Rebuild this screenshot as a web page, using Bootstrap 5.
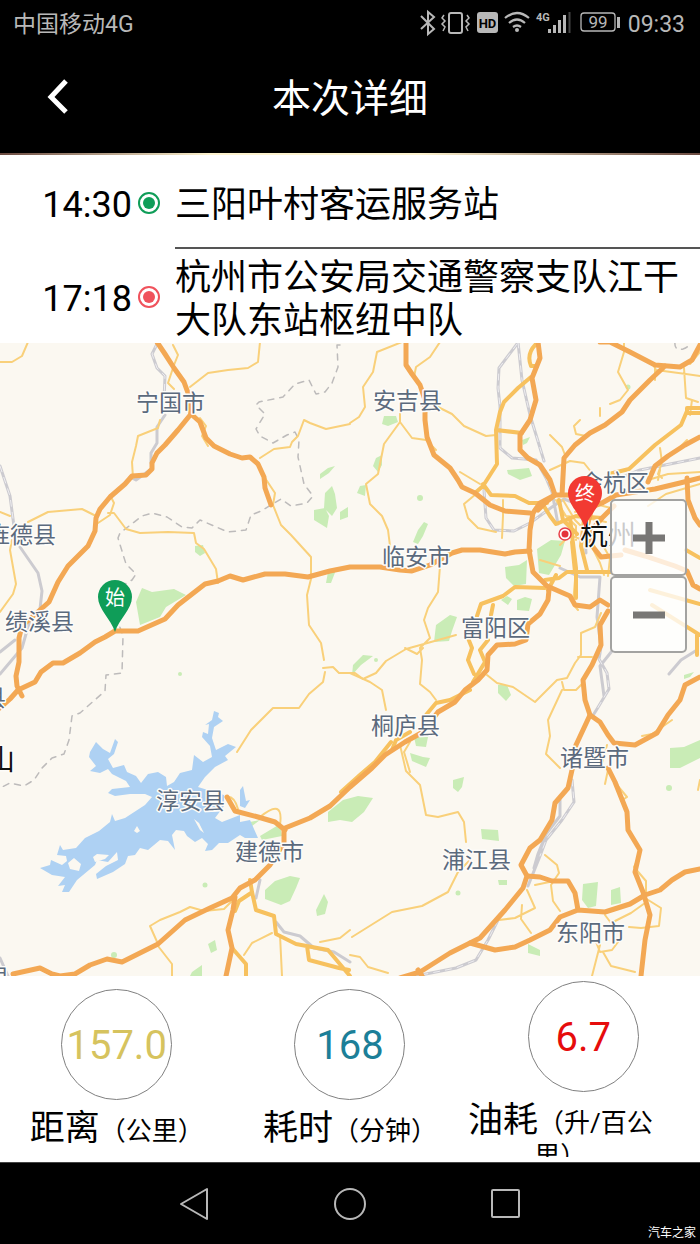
<!DOCTYPE html>
<html lang="zh-CN">
<head>
<meta charset="utf-8">
<meta name="viewport" content="width=device-width, initial-scale=1">
<title>本次详细</title>
<link href="https://cdn.jsdelivr.net/npm/bootstrap@5.3.0/dist/css/bootstrap.min.css" rel="stylesheet">
<script src="https://cdn.jsdelivr.net/npm/bootstrap@5.3.0/dist/js/bootstrap.bundle.min.js"></script>
<style>
  body { font-family: Roboto, "Noto Sans CJK SC", sans-serif; background: #fff; color: #000; }
  .status-bar { height: 48px; padding: 2px 15px 0 13px; color: #b8b8b8; font-size: 23px; line-height: 46px; }
  .status-bar svg { width: 204px; height: 32px; }
  .title-bar { height: 105px; }
  .title-bar h1 { font-size: 39px; line-height: 56px; font-weight: 400; margin: 0; padding-bottom: 4px; }
  .back { width: 116px; height: 105px; padding: 0 0 8px; }
  .head-rule { height: 2px; background: linear-gradient(90deg, #6b4a40, #fdf3cf 30%, #fdf3cf 60%, #6b4a40); }
  .stop { min-height: 94px; font-size: 36px; line-height: 43px; }
  .stop-time { gap: 6px; padding: 6px 15px 0 0; }
  .stop-name { border-bottom: 2px solid #555; padding-top: 8px; }
  .stop:last-child .stop-name { border-bottom: 0; }
  .ring { width: 22px; height: 22px; border: 2px solid currentColor; border-radius: 50%; padding: 3px; margin-bottom: 4px; }
  .ring::before { content: ""; display: block; height: 100%; border-radius: 50%; background: currentColor; }
  .ring-start { color: #0f9d58; }
  .ring-end { color: #f0525c; }
  .map-area { min-height: 633px; background: #fbf8f1; }
  .map-area > svg { position: absolute; inset: 0; width: 100%; height: 100%; }
  .zoomer { position: absolute; top: 156px; right: 13px; width: 77px; }
  .zoomer button { height: 77px; border: 2px solid #a3a3a1; border-radius: 5px; background: rgba(255,255,255,.78); padding: 0; }
  .map-area path { fill: none; stroke-linejoin: round; stroke-linecap: round; }
  .map-area .green path, .map-area .green circle { fill: #c9ecb6; }
  .map-area .hw { stroke: #f3a854; stroke-width: 5; }
  .map-area .mid { stroke: #f7c15e; stroke-width: 4; }
  .map-area .thin { stroke: #f9d07a; stroke-width: 2; }
  .map-area .rail { stroke: #cccbd0; stroke-width: 3; }
  .map-area .rail-dash { stroke: #eeedf0; stroke-width: 1; stroke-dasharray: 6 6; }
  .map-area .edge { stroke: #bdbbbb; stroke-width: 1.5; stroke-dasharray: 6 6; }
  .towns text { font-size: 23px; fill: #5b6a7d; stroke: #fdfcf9; stroke-width: 3px; paint-order: stroke; stroke-linejoin: round; }
  .towns .city { font-size: 28px; fill: #111; }
  .stats { min-height: 186px; }
  .dial { width: 111px; height: 111px; border: 1px solid #808080; border-radius: 50%; font-size: 40px; line-height: 48px; padding-top: 3px; }
  .dial-km { color: #d6c35e; }
  .dial-min { color: #1c7f98; }
  .dial-fuel { color: #e60c0c; }
  .caption-line { font-size: 35px; line-height: 33px; padding: 12px 0 4px; max-height: 65px; overflow: hidden; }
  .caption-line small { font-size: 26px; line-height: 24px; }
  .caption-narrow { padding-right: 46px; }
  .nav-keys { height: 82px; border-top: 1px solid #444; }
  .nav-keys button { width: 156px; height: 81px; padding: 0; }
  .watermark { position: absolute; right: 4px; bottom: 2px; font-size: 12px; line-height: 18px; color: #fff; }
</style>
</head>
<body class="d-flex flex-column min-vh-100">

<header class="bg-black text-white">
  <div class="status-bar d-flex align-items-center">
    <span class="me-auto">中国移动4G</span>
    <svg viewBox="420 10 204 32" fill="none" stroke="#b8b8b8" stroke-width="2" aria-hidden="true">
      <path d="M421 17l13 13-6 5V13l6 5-13 12"/>
      <rect x="449" y="14" width="13" height="20" rx="2"/>
      <path d="M444 16l-2 3 3 3-3 3 3 3-2 4M467 16l2 3-3 3 3 3-3 3 2 4" stroke-width="1.500"/>
      <rect x="477" y="13" width="21" height="21" rx="3" fill="#b8b8b8" stroke="none"/>
      <text x="487.500" y="29" font-size="13" font-weight="700" text-anchor="middle" fill="#000" stroke="none">HD</text>
      <path d="M505 19q12-10 24 0M509 24q8-7 16 0M513 28q4-3 8 0" stroke-width="2.200"/>
      <circle cx="517" cy="31" r="2" fill="#b8b8b8" stroke="none"/>
      <text x="536" y="22" font-size="11" font-weight="700" fill="#b8b8b8" stroke="none">4G</text>
      <path d="M549.500 30v4M554.500 26v8M559.500 21v13M564.500 16v18" stroke-width="3"/>
      <path d="M569.500 13v21" stroke="#444"/>
      <rect x="581" y="14" width="34" height="18" rx="3" stroke-width="1.300"/>
      <path d="M618.500 18v11" stroke-width="3"/>
      <text x="598" y="29" font-size="17" text-anchor="middle" fill="#b8b8b8" stroke="none">99</text>
    </svg>
    <time class="ms-1">09:33</time>
  </div>
  <div class="title-bar d-flex align-items-center">
    <button type="button" class="btn back border-0" aria-label="返回">
      <svg width="24" height="38" viewBox="0 0 24 38" fill="none" stroke="#fff" stroke-width="5"><path d="M20 3L5 19l15 15"/></svg>
    </button>
    <h1 class="flex-grow-1 text-center">本次详细</h1>
    <div class="back"></div>
  </div>
  <div class="head-rule"></div>
</header>

<main class="d-flex flex-column flex-grow-1">
  <section>
    <div class="stop row g-0">
      <div class="stop-time col-3 d-flex align-items-center justify-content-end"><time>14:30</time><span class="ring ring-start"></span></div>
      <div class="stop-name col-9 d-flex align-items-center"><span>三阳叶村客运服务站</span></div>
    </div>
    <div class="stop row g-0">
      <div class="stop-time col-3 d-flex align-items-center justify-content-end"><time>17:18</time><span class="ring ring-end"></span></div>
      <div class="stop-name col-9 d-flex align-items-center"><span>杭州市公安局交通警察支队江干大队东站枢纽中队</span></div>
    </div>
  </section>

  <section class="map-area position-relative flex-grow-1 overflow-hidden">
    <svg viewBox="0 343 700 633" preserveAspectRatio="xMidYMid slice" role="img" aria-label="行程地图">
      <g class="green">
        <path d="M136 602l6-14 10 4 22-3 12 6-20 12-6 10-20 8z"/>
        <path d="M320 474l8-6 7-2-6 7-9 6zM325 493l7-7 3 8 2 14-5 8-8-8zM314 510l11-2 4 8-2 12-13-8zM340 512l8-5v10l-8 3z"/>
        <path d="M195 546l8-1 2 8-5 3-5-4zM328 572l8-2-5 13h-5z"/>
        <path d="M384 416h12l2 6-10 4-6-2zM376 458l6-3v10l-4 7-5-6zM360 486l6-1-1 11-8-3zM418 530l6-8 4 2-5 12-5 8-5-2zM507 470l22-2 3 8-12 4-12-6z"/>
        <path d="M537 549l14-9 14 1-4 14-12 20-10-2zM505 567l14-2 8-5-1 24-12 2-8-8zM517 600l8-3 7 2-3 12-12-1zM501 600l6-4 5 3-4 6zM436 625l14-10 7 2-5 14-3 10-15 1zM353 665l10-10 10 1-12 9-9 10zM498 685l9 0 4 10-5 6-8-8zM522 440l8-3-3 6-4 2z"/>
        <path d="M414 737l14 0-2 10-10-1zM410 753l13 4 7 1-4 9-14-6zM670 748l14-1 16-7v18l-20 10h-10zM684 675l10-3-4 5-6 2z"/>
        <path d="M453 780l11-3-2 10-4 5-5-4zM481 829l17 1 1 11-17-2zM328 812l15-12 15-4 15 2-9 14-12 10-12-2-12 2z"/>
        <path d="M240 824l20-4-12 9-8 4zM260 836l20-12 2 12-20 4zM265 890l10-9 15-5 10 2-4 10-6 13-9 4-16-6zM316 910l8-16 4 8-3 12-8 2zM208 944l7-4 2 10-6 3zM192 972l10-7v11h-12z"/>
        <path d="M583 884l15-2-2 24-8 2-6-8zM611 890l9-3 1 16-10 2zM528 944l12 6v6l-12-3zM498 880h9v5l-8 0z"/>
        <circle cx="420" cy="498" r="3"/><circle cx="628" cy="387" r="2.500"/><circle cx="205" cy="885" r="2.500"/><circle cx="458" cy="893" r="2.500"/><circle cx="669" cy="788" r="3"/><circle cx="180" cy="674" r="2"/><circle cx="376" cy="660" r="2"/><circle cx="114" cy="955" r="3"/>
      </g>
      <path style="fill:#aed1f3" d="M90 752L96 742 103 749 110 753 115 739 118 742 114 754 108 759 113 768 124 765 127 772 136 776 141 783 148 774 158 772 166 777 167 786 174 782 180 773 192 770 194 755 203 762 212 757 210 746 202 737 203 732 208 734 209 724 205 725 212 720 214 711 219 713 218 717 223 721 214 727 212 738 216 750 228 744 236 747 225 756 228 760 215 767 205 777 198 787 224 795 224 806 215 818 222 822 240 815 240 822 250 820 258 838 245 838 240 835 228 843 219 843 212 850 205 851 208 844 202 838 195 842 187 836 184 831 176 830 172 835 175 850 168 841 160 840 148 850 140 848 135 855 128 856 125 864 113 872 97 879 96 874 106 866 118 860 117 852 108 862 97 860 95 865 77 880 69 892 62 892 65 885 58 886 65 877 52 875 40 868 50 865 51 860 62 865 67 861 66 856 57 855 60 845 63 850 76 848 85 838 99 831 110 822 112 814 115 821 125 818 145 805 152 797 145 794 130 794 115 796 108 793 112 789 130 787 126 781 112 774 108 769 100 773 90 771 96 766 89 757zM240 790L243 786 246 801 250 800 245 808 240 806z"/>
      <path style="fill:#fbf8f1" d="M68 863l6-5 7 6-2 7-9-2zM93 857l4-3 12 1-4 4-10 3zM134 831l3-5 3 5-3 2zM194 819l5 4 5 10-4-3z"/>

      <path class="edge" d="M340 345h-3l1 22-6 16-7 9-9 2-7-14-14 4-12 13-24 5-3 3 9 9-9 15 4 7 13 7 14-8 8-3 4 8-1 17 6 27 9 12-6 7-16 3-10-7-20 12-10 4-5 15-18 2-28-12-8 8-10-1-15-10-15-4-10 3-22 17-2 5 8 26 10 10-4 6-24 14 10 7-2 15 7 20-1 37-16 2-1 16-25 22-8 3-3 24-5 14-12 4-10 10-8 12-10 6-14-3-12 6-14 18-8 4-3 22"/>
      <path class="edge" d="M675 342q-1 9 8 7 7-2 5-7"/>

      <path class="rail" d="M158 342l-6 12 5 14 8 8-1 24M165 415l-8 12 0 16-6 10 0 10M150 470l-14 10-6-3M0 466l10 30 5 38M20 547l18 26 4 18-2 18M15 640l-15 12M30 620l-8 28-22 26"/>
      <path class="rail" d="M518 342l4 38 8 35 14 46M517 344l-18 24-1 20 2 18 0 42 12 10 24 2 10 18 6 14 6 32M484 490l2 28 8 12 20 1 16-8 22-16 12-8 16 6 4 14 2 34M620 478l20-8 60-12M560 568l20 9 20 0-3 40 4 30-2 12 8 14 2 16-12 20-5 8M612 651l-12 15 4 30M697 650l-16 10-12 14"/>
      <path class="rail" d="M572 780l2 22-12 18-16 20-6 16-12 30M560 800v16l-14 18-8 20-4 14M498 920l-10 20-12 20-20 8-40 8M276 922l8 10 16 4 14 12 20 4 16 10M0 958l8 18M260 880l-4 18"/>
      <path class="rail-dash" d="M158 342l-6 12 5 14 8 8-1 24M0 466l10 30 5 38M518 342l4 38 8 35 14 46M517 344l-18 24-1 20 2 18 0 42 12 10 24 2 10 18 6 14M484 490l2 28 8 12 20 1 16-8 22-16M620 478l20-8 60-12M601 647l-2 12 8 14 2 16-12 20M572 780l2 22-12 18-16 20-6 16M498 920l-10 20-12 20-20 8-40 8"/>

      <path class="thin" d="M0 362h12l10-6 6-14M173 345l5 10-4 10-6 18 6 6M260 342l-2 20-10 6-20 2-20 3-18 14M160 420l-2 8-20 8-2 10-4 16 1 16M200 418l6 8-4 10 6 10M350 424l-24 5-16-6-6-3-6 16-6 6-2 5-16 2-14 9M265 478l10 15-2 12 8 20 10 10 20 22 0 22-4 16 2 30 12 18 3 17M28 522l20-10 34-3 12 6M12 540l-2 10 6 34-3 10-13 18M110 495l4 8-4 12-12 8M108 513h6l12 16 14 4 28-1 26 1 2 10 8 6 12 20 2 14M0 512l10 4"/>
      <path class="thin" d="M402 342l-25 10-4 20-10 15 2 20-6 10-9 6M440 342l-10 15-14 10-2 10M400 400l0 22 12 16 14 2 10 10M400 422l-16 22-6 30-12 10 4 20 12 12 6 14 2 16M432 404l20 10 12 12 22 10 10-1M460 472l20 12M476 494l-12 10 4 14 10 10 18 4M503 500v16l-1 22M550 435l12 12 3 8M550 470l20-9 14 2 8 10M624 342l0 10-6 20 10 18-8 10-10 4M652 362l4 8 30 4 14 2M684 368l2 30 12 4M692 400l-2 15M655 368v12M580 420l-6 6 2 8 10 2M600 408v8M660 448l2 14-4 12 4 4M648 480l20-6 32-2M563 500l12 20 14 14"/>
      <path class="thin" d="M440 566l-2 26-10 16-4 12 6 18-10 10 2 12-2 24 10 8 6 8M456 635l-50 14-20 12-10 12-13 6M350 673l20 9 12 8 4 20M487 675l10 8 16 4 22 15 10-10 12-12 10-2 8-15 6-8 0-22 14-6 6-14M562 682l2 8 12 0 6-6M578 657h14M562 690l-14 30 2 16-4 18 14 14M575 580l-2 24 5 6M405 648l12 6 6-6"/>
      <path class="thin" d="M325 672l-2 10-14 12-10 14-26 0-22 22-14 22M323 668l10-1 6 6h16l8 6M400 745l6 26 14 14 6 30 12 2 20-5 6 10 2 20M470 860l-12 12-10 20-26 14-30 6-40 25M410 742l-6 10 6 20M545 855l12 10 2 8-8 12 2 16 7 10M527 890l8 18-20 10-16 2M522 905l-1 14 10 14M535 885l24-5M605 915l6 8 20-10 14-10M645 898l16 10-2 18-18 2-12-1M600 945l-8 31M596 942l4 10 12-2 6-8M603 952l8 14 24 6M608 770l-3 14M617 785l10 12-6 4M640 855l-6 12 12 14 0 14M607 745l-5 18M672 720l-20 14-10 2M700 780l-2 10"/>
      <path class="thin" d="M226 797q8-2 12 12M260 817q24-20 20 8M158 944l-8-18 10-6 20-8 10-5 14 4 20-2 10-10M158 946l14 18v12M244 955l8-12 20-10M280 935l2 41M320 942l20-4 10-8M350 955l10 2 8 10 20 6"/>
      <path class="thin" d="M700 352l-10 12M687 440l-8 8M660 470l-2 10M648 506l18-12 34-10M560 545l10-10 20 8 10 20 4 12M575 512l20-8 16 4M540 560l20 6M600 540l10 18-2 18M556 500l10 16 20 2 20 4M562 512l14 14 0 14"/>
      <path class="mid" d="M536 344q-10 10-5 22l6 0M531 377l-13 11-14 14-4 10-4 18 1 34-14 22-8 7M483 484l8 11 24 1 14 7h18M496 430l26 3M542 503l8 13 6 8 20-8 26 2M700 413h-13v-5h13M687 411l-6 14-26 20-26 24-20 5M545 588l-30-1-12 9-22 8-4 12M493 605l-2 10M468 638l4 10-4 12 6 14M488 640l-8 10 5 12-12 20M470 690l-20 10-14 3-10 12M410 732l-14 8-4 10M570 518l6 50 0 30M545 580l14-2 8-6h44M585 510l-4 36 6 24M559 500l4 20 14 14M572 542l3 30M556 575l-8 15"/>
      <path class="mid" d="M250 880l2 12 4 18 18 6 2 18 20 10 32 6 22 26M251 893l-12 8-4 10M232 948l14 16v12M307 946l2 14 30 8 10 2M391 742l-16 20-14 12-20 18M650 590l50 14M652 605l48 30M686 550l14 8M697 635v20"/>

      <path class="hw" d="M157 342l8 12 9 14 10 14 4 11 3 21-13 16-13 15-8 8-5 10 0 6-6 6-14 1-7 8-15 13-10 12-4 9-1 13-7 15-20 20-10 16-9 20-27 24-3 12 0 24-3 14 1 10 5 10"/>
      <path class="hw" d="M0 708l10-9 8-9 17-8 6-10 12-9 10 0 17-10 15-11 10-5 10-6 10 0h13l27-12 13-14 27-21 13-3 12-5 13 4 22-6h20l23 3 22-6 20-4h30l20 3 12 1 18-6 22-12 10-3h18l25 4 10-2 15-1"/>
      <path class="hw" d="M191 414l9 8 6 16 8 8 16 8 12 4 8-1 8 7 6 13 1 11 6 17M406 342v23l6 9 8 11 5 15v20l2 17 7 18 16 13 8 12 4 7 13 6 15 12 15 6 25 2"/>
      <path class="hw" d="M538 342l2 16-8 20 4 22-6 20-10 15v15l8 8 12 7 10 15 5 15-15 8-7 10-3 17-1 20 4 22 14 14 23 10 5 9 15 2 10-7 8 5"/>
      <path class="hw" d="M538 510l8-8 9-7h7l2-37 11-13 15-12 15-8 17-13 8-12 20-20 15-14M600 342h10l20 10 25 13 25 2 12-7 8-15M700 437l-15 8-17 11-13 10-7 16M562 495l18 0 12 12 10-4 14-8 19-3 20-3 25-6 20-5M687 478l1 22 7 18 5 7M592 507l-5 20 6 20 8 10 20-2M590 532l12-14 12-12M625 550l20 6 30 10 12 5 6 14 7 4"/>
      <path class="hw" d="M549 590l-1 10-8 14-12 10-2 16-11 4-18 1-9 10-1 15-9 10-13 10-10 12-17 10-15 20-18 10-20 13-13 13-22 19-20 19-20 12-25 10M284 829v14l-14 22-15 15-15 8-8 10-22 10-25 12-27 24-36 18-15-3-17 6-15 9-15 2-8-2-12-6-27 6"/>
      <path class="hw" d="M227 797l8 14 23 6 17 5 10 8M235 897l-2 13-5 20 4 18-6 28M608 611l-8 14 1 20-9 20-9 15 2 20 5 15-7 15-7 15-4 25-4 18-13 15-3 17-12 20-10 8-9 17 6 11-4 12-18 22-25 28-30 15-30 19-20 6M418 970l4 6"/>
      <path class="hw" d="M590 715l10 7 8 13 6 8 21 2 22-12 11-18 12-15 5-15 15-8M608 768l7 14 12 30 1 18 12 20-5 22 8 20 7 23-5 25-4 36M527 876l13 1 12 4h16l7 12 3 17 27 2 25-8 15-9 15-5 12-10 13-8 15-3M578 910l-18 7-10 13-20 10-15 7-20 3-25-7"/>

      <g class="towns">
        <text x="136" y="411">宁国市</text>
        <text x="373" y="409">安吉县</text>
        <text x="580" y="491">余杭区</text>
        <text x="-13" y="543">旌德县</text>
        <text x="382" y="565">临安市</text>
        <text x="5" y="630">绩溪县</text>
        <text x="461" y="636">富阳区</text>
        <text x="371" y="734">桐庐县</text>
        <text x="560" y="766">诸暨市</text>
        <text x="156" y="809">淳安县</text>
        <text x="235" y="860">建德市</text>
        <text x="442" y="868">浦江县</text>
        <text x="556" y="941">东阳市</text>
        <text x="-17" y="706">县</text>
        <text x="-13" y="986">县</text>
        <text class="city" x="-13" y="770">山</text>
        <text class="city" x="580" y="545">杭州</text>
      </g>

      <circle cx="565" cy="534" r="6" fill="#fff" stroke="#e8414a" stroke-width="1.500"/><circle cx="565" cy="534" r="3.500" fill="#e5333a"/>
      <path style="fill:#0f9d58" d="M115 632C111 619 98 609 98 597a17 17 0 0 1 34 0c0 12-13 22-17 35z"/>
      <path style="fill:#f23a32" d="M585 528C581 515 568 505 568 493a17 17 0 0 1 34 0c0 12-13 22-17 35z"/>
      <text x="115" y="605" font-size="20" fill="#fff" text-anchor="middle">始</text>
      <text x="585" y="501" font-size="20" fill="#fff" text-anchor="middle">终</text>
    </svg>
    <div class="zoomer d-flex flex-column">
      <button type="button" class="d-flex align-items-center justify-content-center" aria-label="放大"><svg width="32" height="32" viewBox="0 0 32 32"><path style="stroke:#787775;stroke-width:7;stroke-linecap:butt" d="M0 16h32M16 0v32"/></svg></button>
      <button type="button" class="d-flex align-items-center justify-content-center" aria-label="缩小"><svg width="32" height="32" viewBox="0 0 32 32"><path style="stroke:#787775;stroke-width:7;stroke-linecap:butt" d="M0 16h32"/></svg></button>
    </div>
  </section>

  <section class="stats row g-0">
    <div class="col-4 d-flex flex-column align-items-center justify-content-center">
      <div class="dial dial-km d-flex align-items-center justify-content-center">157.0</div>
      <div class="caption-line text-center">距离<small>（公里）</small></div>
    </div>
    <div class="col-4 d-flex flex-column align-items-center justify-content-center">
      <div class="dial dial-min d-flex align-items-center justify-content-center">168</div>
      <div class="caption-line text-center">耗时<small>（分钟）</small></div>
    </div>
    <div class="col-4 d-flex flex-column align-items-center justify-content-center">
      <div class="dial dial-fuel d-flex align-items-center justify-content-center">6.7</div>
      <div class="caption-line caption-narrow text-center w-100">油耗<small>（升/百公里）</small></div>
    </div>
  </section>
</main>

<footer class="nav-keys bg-black position-relative d-flex justify-content-center">
  <button type="button" class="btn border-0" aria-label="后退"><svg width="32" height="34" viewBox="0 0 32 34" fill="none" stroke="#b8b8b8" stroke-width="2" stroke-linejoin="round"><path d="M3 17L29 2v30z"/></svg></button>
  <button type="button" class="btn border-0" aria-label="主页"><svg width="34" height="34" viewBox="0 0 34 34" fill="none" stroke="#b8b8b8" stroke-width="2"><circle cx="17" cy="17" r="15"/></svg></button>
  <button type="button" class="btn border-0" aria-label="最近任务"><svg width="32" height="32" viewBox="0 0 32 32" fill="none" stroke="#b8b8b8" stroke-width="2"><rect x="2" y="2" width="27" height="27" rx="1"/></svg></button>
  <span class="watermark">汽车之家</span>
</footer>
</body>
</html>
